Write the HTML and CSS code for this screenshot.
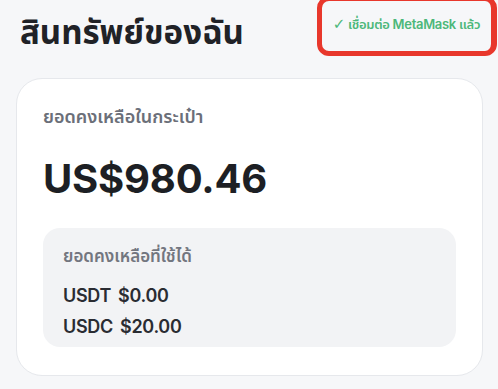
FILE: index.html
```html
<!DOCTYPE html>
<html lang="th">
<head>
<meta charset="utf-8">
<link rel="stylesheet" href="styles.css">
</head>
<body>
<div class="page">
  <header class="header">
    <h1 class="title">สินทรัพย์ของฉัน</h1>
    <div class="status">
      <span class="status-text"><span class="check">✓</span> เชื่อมต่อ MetaMask แล้ว</span>
    </div>
  </header>
  <section class="card">
    <div class="label">ยอดคงเหลือในกระเป๋า</div>
    <div class="total">US$980.46</div>
    <div class="avail">
      <div class="avail-label">ยอดคงเหลือที่ใช้ได้</div>
      <div class="row"><span>USDT</span><span>$0.00</span></div>
      <div class="row"><span>USDC</span><span>$20.00</span></div>
    </div>
  </section>
</div>
</body>
</html>
```

FILE: styles.css
```css
html, body {
  margin: 0;
  padding: 0;
  background: #f6f7f9;
}
body {
  font-family: Inter, "Noto Sans Thai", "Noto Sans", "DejaVu Sans", sans-serif;
  color: #1e2025;
  width: 498px;
  height: 389px;
  overflow: hidden;
}
.page {
  display: flex;
  flex-direction: column;
}
.header {
  display: flex;
  justify-content: space-between;
  align-items: flex-start;
  height: 78px;
}
.title {
  margin: 9px 0 0 20px;
  font-size: 33px;
  font-weight: 700;
  line-height: 46px;
  color: #202227;
}
.status {
  width: 169px;
  height: 48px;
  margin-top: -4px;
  margin-right: 1px;
  border: 5px solid #e8372c;
  border-right-width: 6px;
  border-radius: 12px;
  display: flex;
  align-items: center;
  justify-content: center;
  padding-bottom: 2px;
  box-sizing: content-box;
}
.status-text {
  font-size: 13px;
  font-weight: 600;
  letter-spacing: -0.3px;
  color: #4cb87a;
}
.check {
  font-family: "DejaVu Sans", sans-serif;
  font-weight: 400;
  font-size: 15px;
}
.card {
  margin: 0 15px 0 16px;
  height: 298px;
  box-sizing: border-box;
  background: #fff;
  border: 1px solid #e6e8ec;
  border-radius: 26px;
  padding: 23px 26px 0 26px;
}
.label {
  font-size: 18px;
  font-weight: 600;
  color: #6b6f79;
  line-height: 30px;
}
.total {
  margin-top: 23px;
  font-size: 40px;
  font-weight: 700;
  letter-spacing: -0.2px;
  color: #1d1f24;
  line-height: 48px;
}
.avail {
  margin-top: 25px;
  background: #f2f3f5;
  border-radius: 17px;
  padding: 14px 20px 10px 20px;
  height: 119px;
  box-sizing: border-box;
}
.avail-label {
  font-size: 17px;
  font-weight: 600;
  color: #73767f;
  line-height: 28px;
}
.row {
  display: flex;
  gap: 7px;
  font-size: 18px;
  font-weight: 600;
  letter-spacing: -0.3px;
  color: #2a2c32;
  line-height: 31px;
}
.avail-label + .row {
  margin-top: 10px;
}
```
